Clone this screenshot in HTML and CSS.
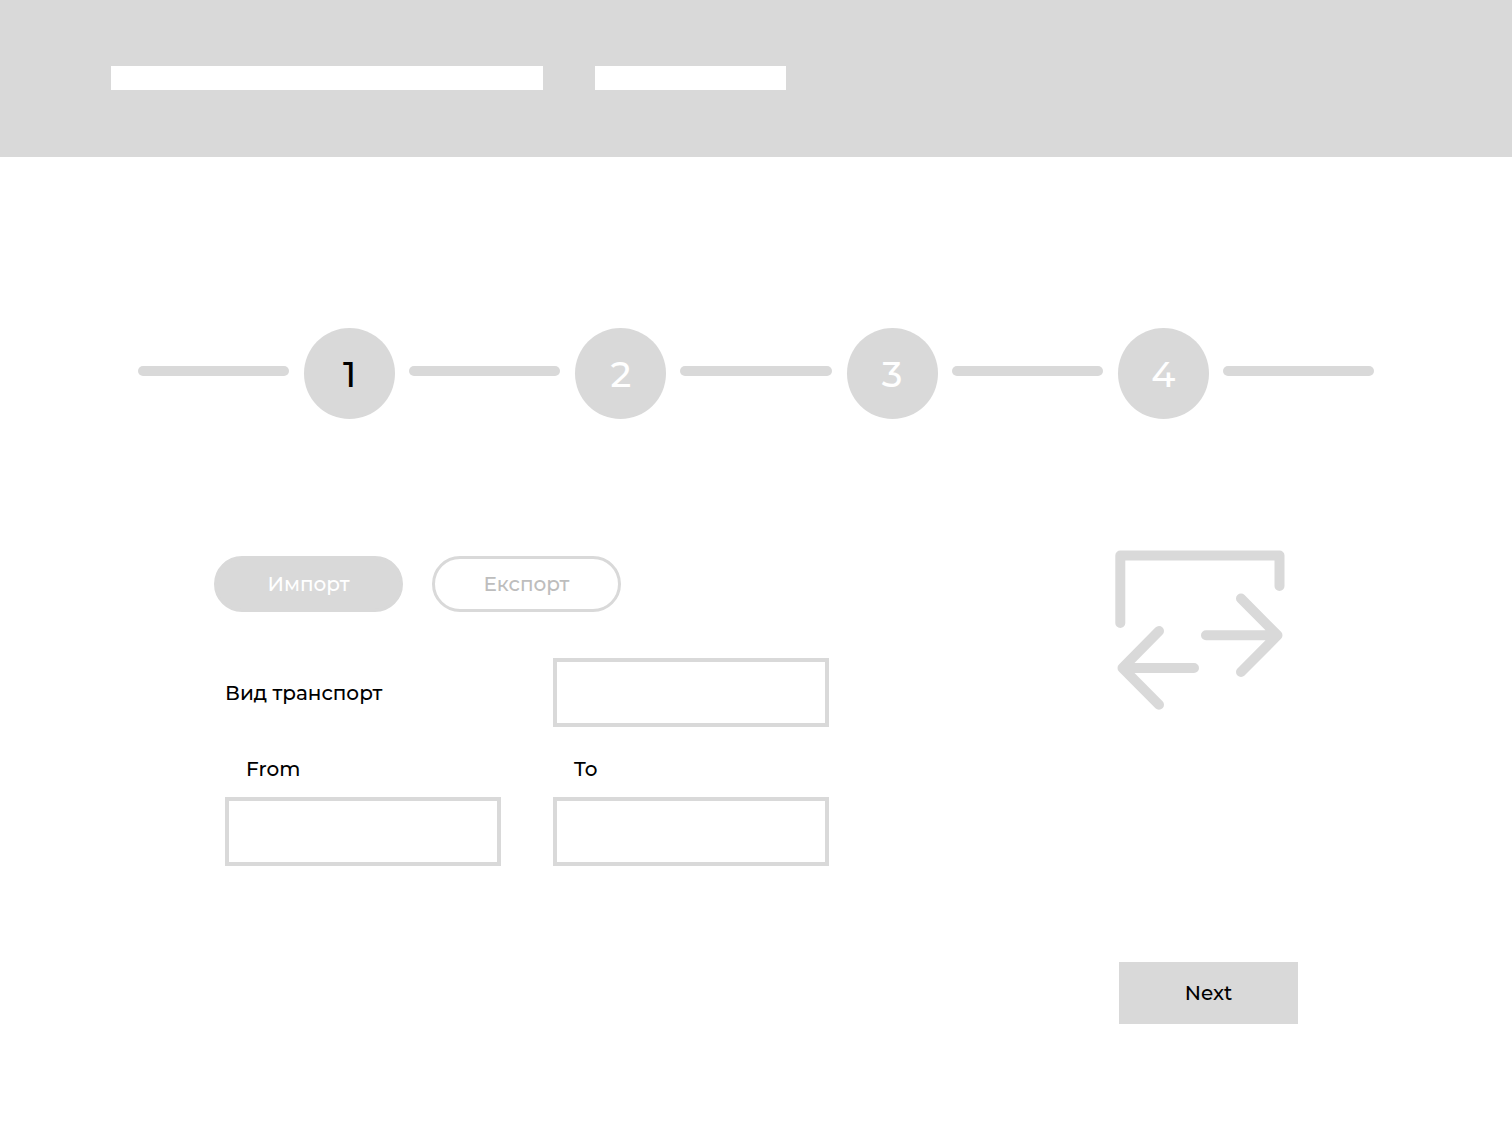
FILE: index.html
```html
<!DOCTYPE html>
<html lang="bg">
<head>
  <meta charset="utf-8">
  <meta name="viewport" content="width=device-width, initial-scale=1">
  <title>Импорт / Експорт</title>
  <link rel="stylesheet" href="styles.css">
</head>
<body>
  <header class="header">
    <div class="header-bar header-bar-long"></div>
    <div class="header-bar header-bar-short"></div>
  </header>

  <div class="stepper">
    <span class="step-line"></span>
    <span class="step step-current" aria-current="step">1</span>
    <span class="step-line"></span>
    <span class="step">2</span>
    <span class="step-line"></span>
    <span class="step">3</span>
    <span class="step-line"></span>
    <span class="step">4</span>
    <span class="step-line"></span>
  </div>

  <main class="main">
    <form class="form" id="transport-form">
      <div class="modes">
        <button class="mode mode-active" type="button">Импорт</button>
        <button class="mode" type="button">Експорт</button>
      </div>
      <div class="fields">
        <label class="label" for="transport">Вид транспорт</label>
        <input class="input" id="transport" type="text">
        <div class="field">
          <label class="label label-indent" for="from">From</label>
          <input class="input" id="from" type="text">
        </div>
        <div class="field">
          <label class="label label-indent" for="to">To</label>
          <input class="input" id="to" type="text">
        </div>
      </div>
    </form>

    <aside class="side">
      <svg class="exchange" viewBox="0 0 170 160" aria-hidden="true">
        <path d="M5.300 73V5.500H164.500V36"/>
        <path d="M91 85.300H162M126 48.500L162.500 85.300L126 122"/>
        <path d="M79 118H8M44 81L7.500 118L44 154.800"/>
      </svg>
      <button class="next" type="submit" form="transport-form">Next</button>
    </aside>
  </main>
</body>
</html>
```
FILE: styles.css
```css
:root {
  --grey: #d9d9d9;
}

* {
  box-sizing: border-box;
}

body {
  margin: 0;
  background: #fff;
  color: #000;
  font-family: Montserrat, Inter, "Liberation Sans", sans-serif;
  font-size: 20px;
  font-weight: 500;
  line-height: 24px;
  /* keep the standard Cyrillic letterforms instead of the Bulgarian ones */
  font-feature-settings: "locl" 0;
}

button,
input {
  font: inherit;
  font-feature-settings: inherit;
}

.header {
  display: flex;
  gap: 52px;
  padding: 66px 111px 67px;
  background: var(--grey);
}

.header-bar {
  height: 24px;
  background: #fff;
}

.header-bar-long {
  width: 432px;
}

.header-bar-short {
  width: 191px;
}

.stepper {
  display: flex;
  align-items: center;
  padding: 171px 138px 0;
}

.step-line {
  flex: 1;
  height: 10px;
  margin-bottom: 5px;
  border-radius: 5px;
  background: var(--grey);
}

.step {
  display: grid;
  place-items: center;
  width: 91px;
  height: 91px;
  margin: 0 14px 0 15px;
  border-radius: 50%;
  background: var(--grey);
  color: #fff;
  font-size: 36px;
  line-height: 44px;
}

.step-current {
  color: #000;
}

.main {
  display: flex;
  justify-content: space-between;
  padding: 131px 214px 108px;
}

.form {
  padding-top: 6px;
}

.modes {
  display: flex;
  gap: 29px;
}

.mode {
  width: 189px;
  height: 56px;
  padding: 0;
  border: 3px solid var(--grey);
  border-radius: 28px;
  background: #fff;
  color: #bdbdbd;
}

.mode-active {
  background: var(--grey);
  color: #fff;
}

.fields {
  display: grid;
  grid-template-columns: repeat(2, 276px);
  align-items: center;
  gap: 30px 52px;
  padding: 46px 0 0 11px;
}

.field {
  display: grid;
  gap: 16px;
}

.label-indent {
  padding-left: 21px;
}

.input {
  width: 100%;
  height: 69px;
  padding: 0 16px;
  border: 4px solid var(--grey);
  border-radius: 0;
  background: #fff;
}

.side {
  display: flex;
  flex-direction: column;
  gap: 252px;
  width: 183px;
}

.exchange {
  width: 170px;
  height: 160px;
  fill: none;
  stroke: var(--grey);
  stroke-width: 10;
  stroke-linecap: round;
  stroke-linejoin: round;
}

.next {
  align-self: flex-end;
  width: 179px;
  height: 62px;
  padding: 0;
  border: 0;
  background: var(--grey);
  color: #000;
}
```
